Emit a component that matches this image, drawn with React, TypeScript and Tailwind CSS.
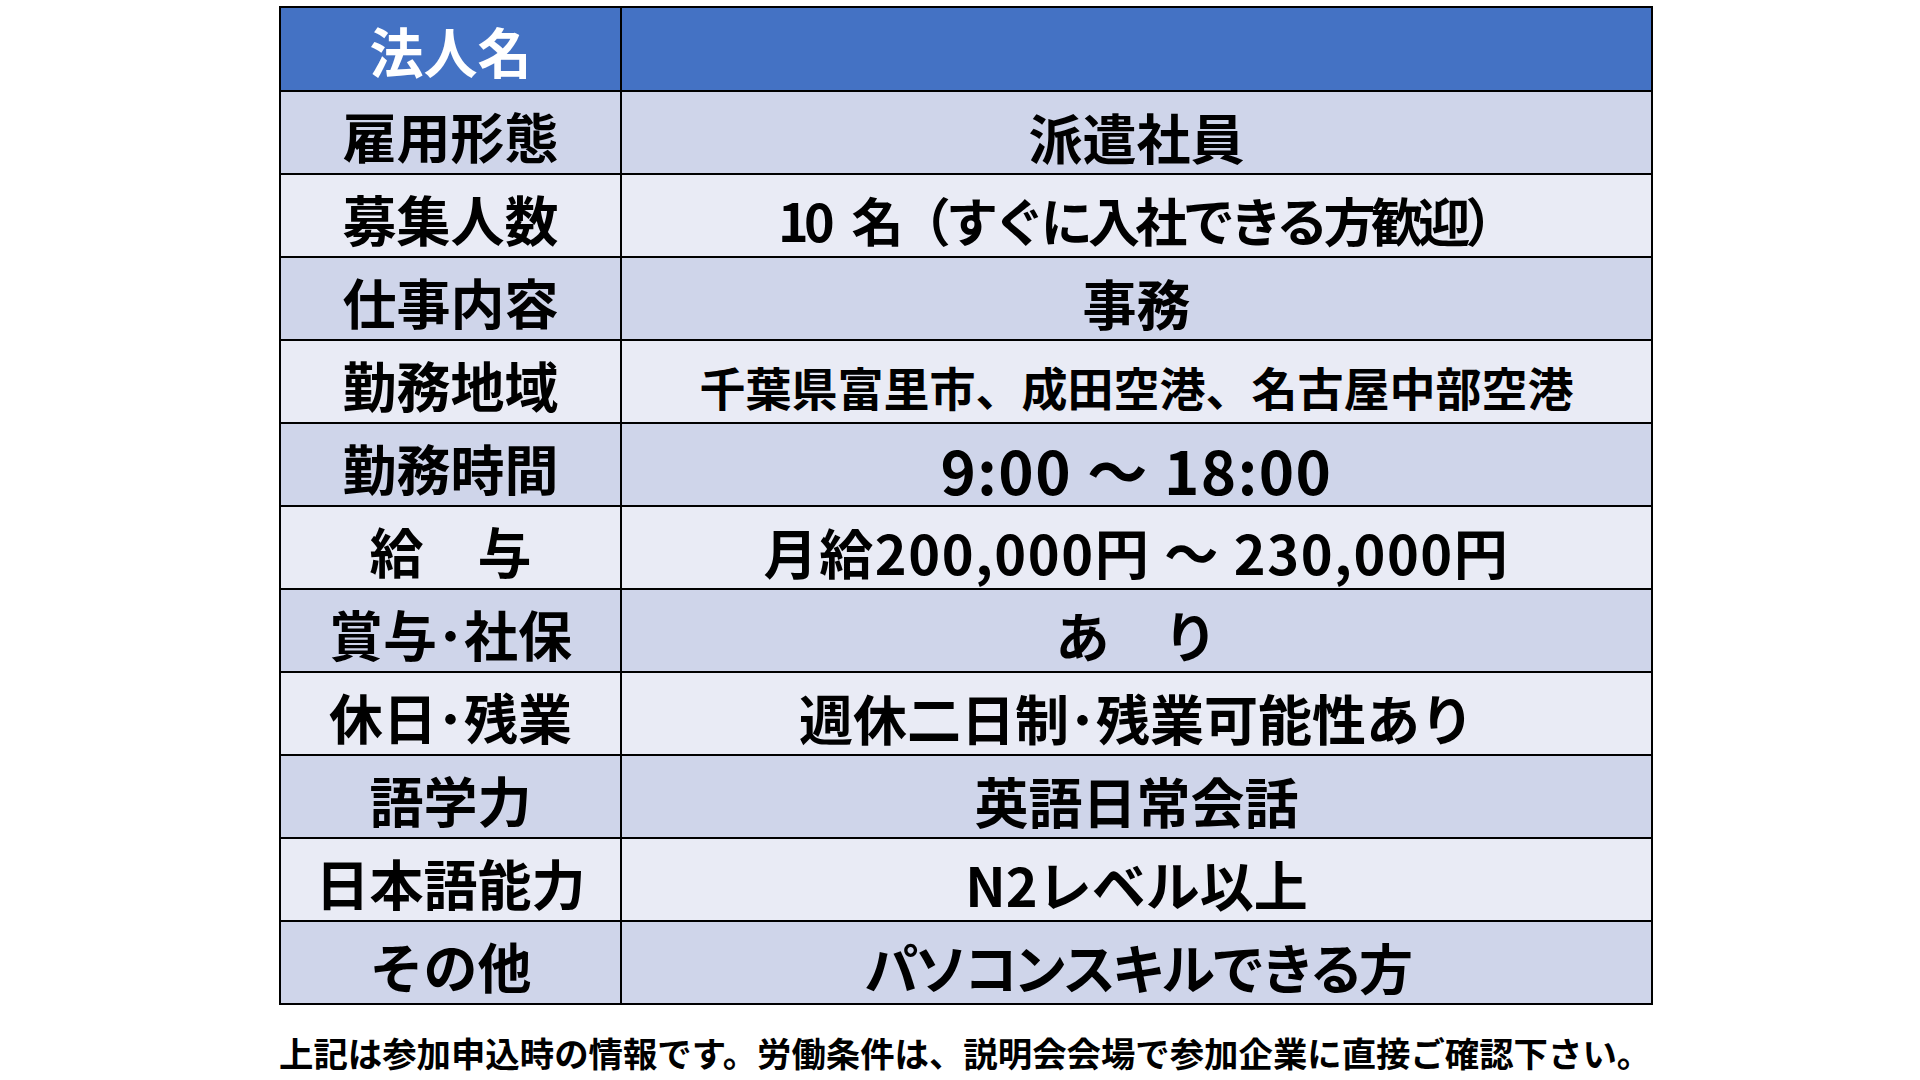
const rows: { label: string; value: string; valueClass?: string }[] = [
  { label: '雇用形態', value: '派遣社員' },
  { label: '募集人数', value: '10\u2002名（すぐに入社できる方歓迎）', valueClass: 'text-[52px] tracking-[-0.09em] pl-[18px]' },
  { label: '仕事内容', value: '事務' },
  { label: '勤務地域', value: '千葉県富里市、成田空港、名古屋中部空港', valueClass: 'text-[46px]' },
  { label: '勤務時間', value: '9:00 ～ 18:00', valueClass: 'text-[60px] tracking-[0.025em]' },
  { label: '給　与', value: '月給200,000円 ～ 230,000円', valueClass: 'text-[54px] tracking-[0.03em]' },
  { label: '賞与･社保', value: 'あ　り' },
  { label: '休日･残業', value: '週休二日制･残業可能性あり' },
  { label: '語学力', value: '英語日常会話' },
  { label: '日本語能力', value: 'N2レベル以上' },
  { label: 'その他', value: 'パソコンスキルできる方', valueClass: 'text-[54px] tracking-[-0.08em]' },
]

export default function App() {
  return (
    <div
      className="w-[1920px] h-[1080px] bg-white text-black font-bold"
      style={{ fontFamily: '"Noto Sans CJK JP", "Noto Sans", sans-serif' }}
    >
      <div className="ml-[279px] pt-[6px] w-[1374px]">
        <div className="border-2 border-black">
          {/* header row */}
          <div className="grid grid-cols-[341px_1fr] h-[82px] bg-[#4472C4]">
            <div className="flex items-center justify-center border-r-2 border-black text-white text-[54px] leading-none pt-[4px]">
              法人名
            </div>
            <div />
          </div>
          {rows.map((row, i) => (
            <div
              key={row.label}
              className={`grid grid-cols-[341px_1fr] h-[83px] border-t-2 border-black ${
                i % 2 === 0 ? 'bg-[#CFD5EA]' : 'bg-[#E9EBF5]'
              }`}
            >
              <div className="flex items-center justify-center border-r-2 border-black text-[54px] leading-none pt-[6px] whitespace-nowrap">
                {row.label}
              </div>
              <div
                className={`flex items-center justify-center leading-none pt-[8px] whitespace-nowrap ${
                  row.valueClass ?? 'text-[54px]'
                }`}
              >
                {row.value}
              </div>
            </div>
          ))}
        </div>
        <p className="mt-[30px] text-[34.4px] leading-none whitespace-nowrap">
          上記は参加申込時の情報です。労働条件は、説明会会場で参加企業に直接ご確認下さい。
        </p>
      </div>
    </div>
  )
}
